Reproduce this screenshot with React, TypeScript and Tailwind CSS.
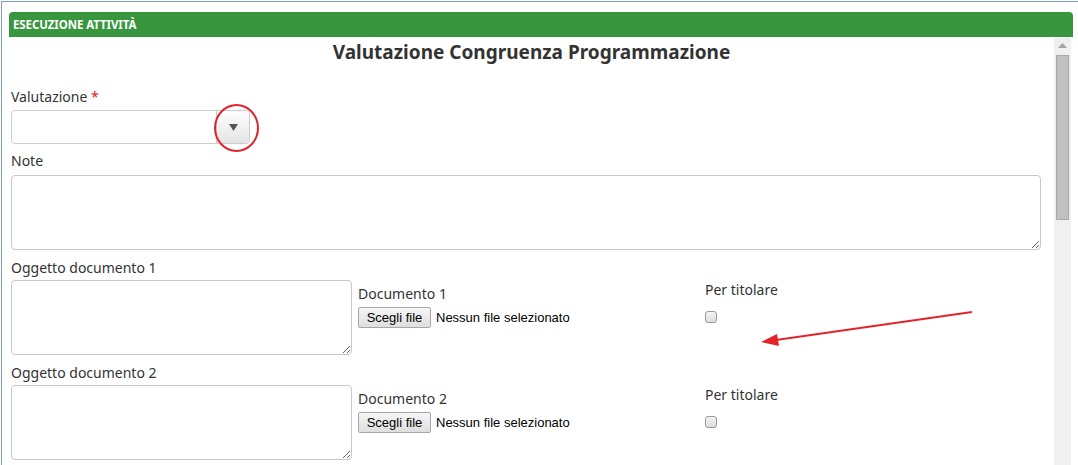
import React from "react";

const labelCls =
  "h-[20px] leading-[20px] text-[14px] text-[#333] whitespace-nowrap";

function FileBox({ n }: { n: number }) {
  return (
    <div className="flex flex-col">
      <div className={labelCls}>Documento {n}</div>
      <div className="mt-[3px] flex items-center" style={{ fontFamily: '"Liberation Sans", Arial, sans-serif' }}>
        <div className="h-[21px] w-[73px] flex items-center justify-center rounded-[2px] border border-[#a6a6a6] bg-gradient-to-b from-[#f6f6f6] to-[#dedede] text-[13px] text-black">
          Scegli file
        </div>
        <div className="ml-[5px] text-[13px] text-black">Nessun file selezionato</div>
      </div>
    </div>
  );
}

function CheckCol() {
  return (
    <div className="flex flex-col">
      <div className={labelCls}>Per titolare</div>
      <div className="mt-[11px] w-[12px] h-[12px] rounded-[3px] border border-[#9a9a9a] bg-gradient-to-b from-[#f4f4f4] to-[#dcdcdc]" />
    </div>
  );
}

function DocRow({ n }: { n: number }) {
  return (
    <div className="grid grid-cols-[341px_341px_1fr] gap-x-[6px]">
      <div className="flex flex-col">
        <div className={labelCls}>Oggetto documento {n}</div>
        <textarea className="mt-[2px] h-[75px] w-[341px] rounded-[4px] border border-[#c8c8c8] bg-white outline-none" />
      </div>
      <div className="pt-[26px]">
        <FileBox n={n} />
      </div>
      <div className="pt-[22px]">
        <CheckCol />
      </div>
    </div>
  );
}

export default function App() {
  return (
    <div
      className="relative w-[1078px] h-[465px] overflow-hidden bg-white"
      style={{ fontFamily: '"Noto Sans", "Open Sans", sans-serif' }}
    >
      <div className="mt-px ml-px h-[464px] border-t border-l border-[#7f9db9] pl-[7px] pr-[5px] pt-[10px] flex flex-col">
        <div className="h-[25px] rounded-t-[4px] bg-[#38963e] flex items-center pl-[4px]">
          <span className="text-[11.5px] font-bold text-white tracking-[-0.1px]">
            ESECUZIONE ATTIVITÀ
          </span>
        </div>
        <div className="flex flex-1 pr-[2px]">
          <div className="flex-1 pl-[2px] pr-[13px] flex flex-col">
            <div className="h-[30px] -ml-[2px] -mr-[13px] flex items-center justify-center text-[19px] font-bold text-[#333]">
              Valutazione Congruenza Programmazione
            </div>
            <div className={labelCls + " mt-[20px]"}>
              Valutazione <span className="text-[#d9251c]">*</span>
            </div>
            <div className="relative mt-[3px] w-[239px] h-[34px] rounded-[4px] border border-[#cccccc] flex">
              <div className="flex-1" />
              <div className="w-[33px] border-l border-[#cccccc] rounded-r-[4px] bg-gradient-to-b from-[#ffffff] to-[#e4e4e4] flex items-center justify-center">
                <svg width="9" height="7" viewBox="0 0 9 7">
                  <path d="M0 0 L9 0 L4.5 7 Z" fill="#555" />
                </svg>
              </div>
              <div className="absolute left-[202px] top-[-7px] w-[45px] h-[48px] rounded-[50%] border-2 border-[#e0242c]" />
            </div>
            <div className={labelCls + " mt-[7px]"}>Note</div>
            <textarea className="mt-[4px] h-[75px] w-full rounded-[4px] border border-[#c8c8c8] bg-white outline-none" />
            <div className="mt-[8px]">
              <DocRow n={1} />
            </div>
            <div className="mt-[8px]">
              <DocRow n={2} />
            </div>
          </div>
          <div className="w-[17px] bg-[#f0f0f0] flex flex-col items-center pt-[6px]">
            <svg width="9" height="5" viewBox="0 0 9 5">
              <path d="M4.5 0 L9 5 L0 5 Z" fill="#a3a3a3" />
            </svg>
            <div className="mt-[7px] w-[13px] h-[165px] bg-[#c1c1c1] border border-[#a8a8a8]" />
          </div>
        </div>
      </div>
      <svg className="absolute left-0 top-0 pointer-events-none" width="1078" height="465">
        <line x1="972" y1="312" x2="776" y2="340" stroke="#e3242b" strokeWidth="2" />
        <path d="M761 342 L777 334 L779 346 Z" fill="#e3242b" />
      </svg>
    </div>
  );
}
